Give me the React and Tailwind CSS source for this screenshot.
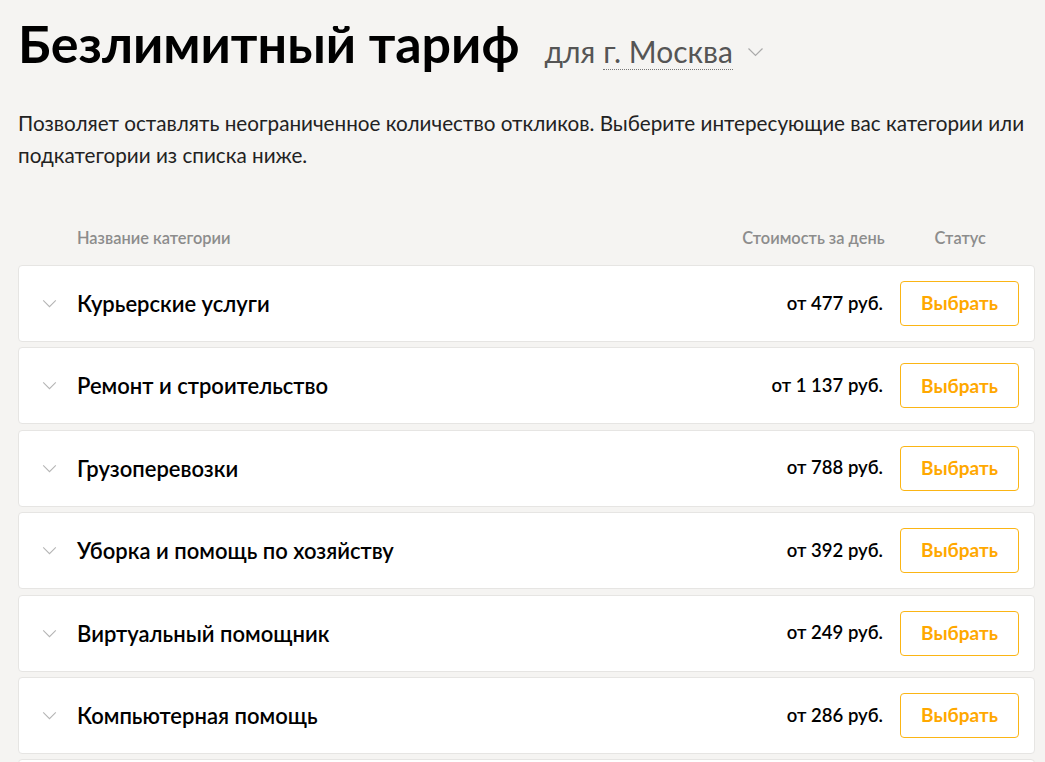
import React from 'react';

const categories = [
  { name: 'Курьерские услуги', price: 'от 477 руб.' },
  { name: 'Ремонт и строительство', price: 'от 1 137 руб.' },
  { name: 'Грузоперевозки', price: 'от 788 руб.' },
  { name: 'Уборка и помощь по хозяйству', price: 'от 392 руб.' },
  { name: 'Виртуальный помощник', price: 'от 249 руб.' },
  { name: 'Компьютерная помощь', price: 'от 286 руб.' },
];

const Chevron = ({ className }) => (
  <svg viewBox="0 0 16 10" className={className} fill="none" stroke="currentColor" strokeWidth="1.2">
    <path d="M1 1.5 L8 8.5 L15 1.5" />
  </svg>
);

const CategoryRow = ({ name, price }) => (
  <div className="flex items-center shrink-0 h-[77px] bg-white border border-[#e6e5e3] rounded-[4px] pl-[23px] pr-[15px]">
    <Chevron className="w-[15px] h-[9px] text-[#b5b5b5] shrink-0" />
    <div className="ml-[20px] flex-1 text-[22px] font-semibold text-black">{name}</div>
    <div className="text-[18.5px] font-semibold text-black">{price}</div>
    <button className="ml-[17px] w-[119px] h-[45px] border border-[#fbb515] rounded-[4px] text-[19px] font-bold text-[#ffa800]">
      Выбрать
    </button>
  </div>
);

export default function App() {
  return (
    <div className="h-[762px] bg-[#f5f4f2] pl-[18px] pr-[10px] pt-[8px] font-['Lato','Open_Sans',sans-serif] overflow-hidden">
      <div className="flex items-baseline">
        <h1 className="text-[52px] font-bold text-black leading-[70px]">Безлимитный тариф</h1>
        <div className="ml-[25px] text-[30px] text-[#555] flex items-baseline">
          <span>для</span>
          <span className="ml-[8px] border-b border-dotted border-[#777] leading-[36px]">г. Москва</span>
          <Chevron className="ml-[14px] w-[17px] h-[10px] text-[#aaa] self-center" />
        </div>
      </div>

      <p className="mt-[29px] pr-[8px] text-[20.7px] leading-[32px] text-[#222]">
        Позволяет оставлять неограниченное количество откликов. Выберите интересующие вас категории или подкатегории из списка ниже.
      </p>

      <div className="mt-[56px] flex items-center text-[16.4px] font-semibold text-[#8c8c8c] pl-[59px] pr-[49px] h-[22px]">
        <div className="flex-1">Название категории</div>
        <div>Стоимость за день</div>
        <div className="ml-[50px]">Статус</div>
      </div>

      <div className="mt-[16px] flex flex-col gap-[5.4px]">
        {categories.map((c) => (
          <CategoryRow key={c.name} name={c.name} price={c.price} />
        ))}
        {/* next row peeks in at the bottom edge */}
        <div className="shrink-0 h-[77px] bg-white border border-[#e6e5e3] rounded-[4px]" />
      </div>
    </div>
  );
}
